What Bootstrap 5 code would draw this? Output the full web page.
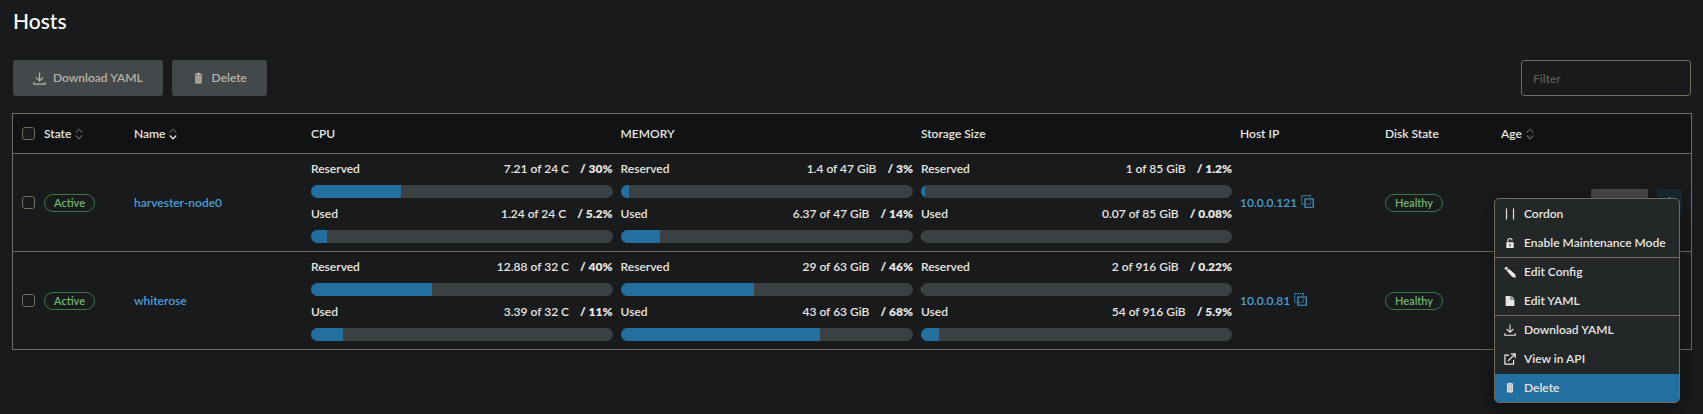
<!DOCTYPE html>
<html lang="en" data-bs-theme="dark">
<head>
<meta charset="utf-8">
<meta name="viewport" content="width=device-width, initial-scale=1">
<title>Hosts</title>
<link href="https://cdn.jsdelivr.net/npm/bootstrap@5.3.0/dist/css/bootstrap.min.css" rel="stylesheet">
<style>
  :root { --page: #181a1b; --line: #736b5e; --ink: #e8e6e3; --blue: #236f9f; --sky: #4a9fd9; }
  body { background: var(--page); color: var(--ink); font: 600 12px/20px Lato, "Open Sans", sans-serif; }
  .page { padding: 8px 11px 8px 12px; }
  h1 { font-size: 21px; line-height: 26px; font-weight: 500; padding-left: 1px; }
  .toolbar { margin: 26px 0 17px; padding: 0 1px; }
  .bulk-set { gap: 9px; }
  .bulk { --bs-btn-font-size: 12px; --bs-btn-line-height: 20px; --bs-btn-font-weight: 600; height: 36px; padding: 0 20px; border: 0; border-radius: 3px;
    display: inline-flex; align-items: center; gap: 7px; }
  .bulk:disabled { background: #43494b; color: #b8b2a9; opacity: 1; }
  .filter-box { width: 170px; height: 36px; padding: 0 11px; font-size: 12px; font-weight: 600; background: var(--page); border: 1px solid var(--line); border-radius: 3px; color: var(--ink); }
  .filter-box::placeholder { color: #605b53; opacity: 1; }

  .hosts { table-layout: fixed; border: 1px solid var(--line); border-collapse: separate; border-spacing: 0; width: 100%; }
  .hosts th, .hosts td { padding: 0 4px; vertical-align: middle; font-weight: 600; text-align: left; white-space: nowrap; }
  .hosts thead th { height: 39px; background: #101213; }
  .hosts tbody td { border-top: 1px solid var(--line); }
  .c-check { width: 27px; } .c-state { width: 90px; } .c-name { width: 177px; }
  .c-cpu { width: 18.45%; } .c-mem { width: 17.9%; }
  .c-ip { width: 145px; } .c-disk { width: 116px; } .c-age { width: 194px; }
  .hosts .pick { padding-left: 9px; }
  .hosts .form-check-input { display: block; margin: 0; width: 13px; height: 13px; border: 1px solid var(--line); border-radius: 3px; background-color: var(--page); }
  .hosts a { color: var(--sky); text-decoration: none; }
  .sorter { border: 0; padding: 0; background: none; color: inherit; font-weight: inherit; display: inline-flex; align-items: center; gap: 4px; vertical-align: middle; }
  .hosts .state-pill { display: block; width: max-content; padding: 0 9px; height: 18px; font-size: 11px; line-height: 16px; border: 1px solid #3d7740; border-radius: 9px; color: #72b574; }

  .meters { padding: 5px 0 8px; display: grid; gap: 6px; }
  .meters b { margin-left: 8px; font-weight: 800; }
  .meter { height: 13px; border-radius: 7px; background: #3b4042; }
  .meter .progress-bar { background: var(--blue); }

  .ip-cell { gap: 4px; }
  .copy-btn { border: 0; padding: 0 0 2px; background: none; color: var(--sky); }
  .row-actions { position: relative; height: 27px; gap: 9px; padding-right: 5px; }
  .act { border: 0; border-radius: 2px; height: 27px; padding: 0; }
  .act-console { width: 57px; background: #45494b; }
  .act-more { width: 25px; background: #192833; color: #3b8fc4; }
  .row-menu { position: absolute; z-index: 5; right: 7px; top: 9px; width: 186px; padding-top: 1px; background: #232728; border: 1px solid var(--line); border-radius: 5px; box-shadow: 0 5px 20px rgba(0,0,0,.4); overflow: hidden; }
  .row-menu .group { display: grid; gap: 1px; }
  .row-menu .group + .group { border-top: 1px solid var(--line); }
  .row-menu button { border: 0; background: none; color: var(--ink); font-weight: inherit; height: 28px; padding: 0 9px; display: flex; align-items: center; gap: 8px; text-align: left; }
  .row-menu button.chosen { background: var(--blue); }
  svg { display: block; flex: none; }
</style>
</head>
<body>
<svg width="0" height="0" class="position-absolute" aria-hidden="true">
  <symbol id="i-down" viewBox="0 0 12 12"><path d="M6 0.5V8M2.6 5 6 8.3 9.4 5M0.8 9.3v1.9h10.4V9.3" fill="none" stroke="currentColor" stroke-width="1.1"/></symbol>
  <symbol id="i-trash" viewBox="0 0 12 12"><path d="M2.6 1.6h2L5 .8h2l.4.8h2v1.2H2.6zM3 3.3h6V9.6q0 .9-.9.9H3.900q-.9 0-.9-.9z" fill="currentColor"/><path d="M4.800 4.500v4.800M7.200 4.500v4.800" stroke="#444" stroke-opacity=".6" stroke-width=".7"/></symbol>
  <symbol id="i-sort" viewBox="0 0 8 12"><path d="M.7 4.500 4 1.200 7.300 4.500" fill="none" stroke="#5c5a57" stroke-width="1.1"/><path d="M.7 7.500 4 10.800 7.300 7.500" fill="none" stroke="currentColor" stroke-width="1.3"/></symbol>
  <symbol id="i-copy" viewBox="0 0 12 12"><path d="M3.700 3.700h7.600v7.600H3.700z" fill="none" stroke="currentColor" stroke-width="1.1"/><path d="M8.600 5v3.600H5" fill="none" stroke="currentColor" stroke-width=".8" stroke-dasharray="1.200 .8"/><path d="M2.500 8.600H.6V.6h8v2" fill="none" stroke="currentColor" stroke-width="1" stroke-dasharray="1.200 .9"/></symbol>
  <symbol id="i-pause" viewBox="0 0 12 12"><path d="M2.500 .5v11M9.500 .5v11" stroke="currentColor" stroke-width="1.2"/></symbol>
  <symbol id="i-lock" viewBox="0 0 12 12"><path d="M3.900 5.500V3.600a2.100 2.100 0 0 1 4.200 0" fill="none" stroke="currentColor" stroke-width="1.100"/><path fill-rule="evenodd" d="M2.300 5.200h7.400v5.900H2.300zM5.500 7v2.400h1V7z" fill="currentColor"/></symbol>
  <symbol id="i-pencil" viewBox="0 0 12 12"><path d="M.2 2.400 2.200 .400 4.200 2.200 2.100 4.300zM2.600 4.800 4.800 2.700 11.200 8.200 11.900 11.800 8.300 11.100z" fill="currentColor"/></symbol>
  <symbol id="i-file" viewBox="0 0 12 12"><path d="M1.600 .900h4.900v3.600h3.900v6.600H1.600z M7.300 .900 10.400 3.800H7.300z" fill="currentColor"/></symbol>
  <symbol id="i-open" viewBox="0 0 12 12"><path d="M5 2.200H.9v8.900h8.700V7M6.800.8h4.400v4.400M11 1 4 8" fill="none" stroke="currentColor" stroke-width="1.200"/></symbol>
</svg>

<main class="page min-vh-100">
  <h1 class="m-0">Hosts</h1>

  <div class="toolbar d-flex align-items-center justify-content-between">
    <div class="d-flex bulk-set">
      <button type="button" class="btn bulk" disabled><svg width="13" height="13"><use href="#i-down"/></svg>Download YAML</button>
      <button type="button" class="btn bulk" disabled><svg width="13" height="13"><use href="#i-trash"/></svg>Delete</button>
    </div>
    <input type="search" class="form-control filter-box" placeholder="Filter" aria-label="Filter">
  </div>

  <table class="hosts">
    <colgroup><col class="c-check"><col class="c-state"><col class="c-name"><col class="c-cpu"><col class="c-mem"><col><col class="c-ip"><col class="c-disk"><col class="c-age"></colgroup>
    <thead>
      <tr>
        <th class="pick"><input class="form-check-input" type="checkbox" aria-label="Select all hosts"></th>
        <th><button type="button" class="sorter">State<svg width="8" height="12" color="#5c5a57"><use href="#i-sort"/></svg></button></th>
        <th><button type="button" class="sorter">Name<svg width="8" height="12"><use href="#i-sort"/></svg></button></th>
        <th>CPU</th>
        <th>MEMORY</th>
        <th>Storage Size</th>
        <th>Host IP</th>
        <th>Disk State</th>
        <th><button type="button" class="sorter">Age<svg width="8" height="12" color="#5c5a57"><use href="#i-sort"/></svg></button></th>
      </tr>
    </thead>
    <tbody>
      <tr>
        <td class="pick"><input class="form-check-input" type="checkbox" aria-label="Select harvester-node0"></td>
        <td><span class="state-pill">Active</span></td>
        <td><a href="#harvester-node0">harvester-node0</a></td>
        <td><div class="meters">
          <div class="d-flex justify-content-between"><span>Reserved</span><span>7.21 of 24 C <b>/ 30%</b></span></div>
          <div class="progress meter"><div class="progress-bar" style="width:30%"></div></div>
          <div class="d-flex justify-content-between"><span>Used</span><span>1.24 of 24 C <b>/ 5.2%</b></span></div>
          <div class="progress meter"><div class="progress-bar" style="width:5.2%"></div></div>
        </div></td>
        <td><div class="meters">
          <div class="d-flex justify-content-between"><span>Reserved</span><span>1.4 of 47 GiB <b>/ 3%</b></span></div>
          <div class="progress meter"><div class="progress-bar" style="width:3%"></div></div>
          <div class="d-flex justify-content-between"><span>Used</span><span>6.37 of 47 GiB <b>/ 14%</b></span></div>
          <div class="progress meter"><div class="progress-bar" style="width:13.5%"></div></div>
        </div></td>
        <td><div class="meters">
          <div class="d-flex justify-content-between"><span>Reserved</span><span>1 of 85 GiB <b>/ 1.2%</b></span></div>
          <div class="progress meter"><div class="progress-bar" style="width:1.2%"></div></div>
          <div class="d-flex justify-content-between"><span>Used</span><span>0.07 of 85 GiB <b>/ 0.08%</b></span></div>
          <div class="progress meter"><div class="progress-bar" style="width:0.3%"></div></div>
        </div></td>
        <td><div class="d-flex align-items-center ip-cell"><a href="#ip-121">10.0.0.121</a><button type="button" class="copy-btn" aria-label="Copy 10.0.0.121"><svg width="13" height="13"><use href="#i-copy"/></svg></button></div></td>
        <td><span class="state-pill">Healthy</span></td>
        <td>
          <div class="row-actions d-flex justify-content-end">
            <button type="button" class="act act-console" aria-label="Console"></button>
            <button type="button" class="act act-more" aria-label="More actions" aria-expanded="true"><svg class="mx-auto" width="3" height="13" viewBox="0 0 3 13" fill="currentColor"><circle cx="1.500" cy="1.500" r="1"/><circle cx="1.500" cy="6.500" r="1"/><circle cx="1.500" cy="11.500" r="1"/></svg></button>
            <div class="row-menu">
              <div class="group">
                <button type="button"><svg width="12" height="12"><use href="#i-pause"/></svg>Cordon</button>
                <button type="button"><svg width="12" height="12"><use href="#i-lock"/></svg>Enable Maintenance Mode</button>
              </div>
              <div class="group">
                <button type="button"><svg width="12" height="12"><use href="#i-pencil"/></svg>Edit Config</button>
                <button type="button"><svg width="12" height="12"><use href="#i-file"/></svg>Edit YAML</button>
              </div>
              <div class="group">
                <button type="button"><svg width="12" height="12"><use href="#i-down"/></svg>Download YAML</button>
                <button type="button"><svg width="12" height="12"><use href="#i-open"/></svg>View in API</button>
                <button type="button" class="chosen"><svg width="12" height="12"><use href="#i-trash"/></svg>Delete</button>
              </div>
            </div>
          </div>
        </td>
      </tr>
      <tr>
        <td class="pick"><input class="form-check-input" type="checkbox" aria-label="Select whiterose"></td>
        <td><span class="state-pill">Active</span></td>
        <td><a href="#whiterose">whiterose</a></td>
        <td><div class="meters">
          <div class="d-flex justify-content-between"><span>Reserved</span><span>12.88 of 32 C <b>/ 40%</b></span></div>
          <div class="progress meter"><div class="progress-bar" style="width:40.25%"></div></div>
          <div class="d-flex justify-content-between"><span>Used</span><span>3.39 of 32 C <b>/ 11%</b></span></div>
          <div class="progress meter"><div class="progress-bar" style="width:10.6%"></div></div>
        </div></td>
        <td><div class="meters">
          <div class="d-flex justify-content-between"><span>Reserved</span><span>29 of 63 GiB <b>/ 46%</b></span></div>
          <div class="progress meter"><div class="progress-bar" style="width:45.6%"></div></div>
          <div class="d-flex justify-content-between"><span>Used</span><span>43 of 63 GiB <b>/ 68%</b></span></div>
          <div class="progress meter"><div class="progress-bar" style="width:68.1%"></div></div>
        </div></td>
        <td><div class="meters">
          <div class="d-flex justify-content-between"><span>Reserved</span><span>2 of 916 GiB <b>/ 0.22%</b></span></div>
          <div class="progress meter"><div class="progress-bar" style="width:0.3%"></div></div>
          <div class="d-flex justify-content-between"><span>Used</span><span>54 of 916 GiB <b>/ 5.9%</b></span></div>
          <div class="progress meter"><div class="progress-bar" style="width:5.9%"></div></div>
        </div></td>
        <td><div class="d-flex align-items-center ip-cell"><a href="#ip-81">10.0.0.81</a><button type="button" class="copy-btn" aria-label="Copy 10.0.0.81"><svg width="13" height="13"><use href="#i-copy"/></svg></button></div></td>
        <td><span class="state-pill">Healthy</span></td>
        <td></td>
      </tr>
    </tbody>
  </table>
</main>
<script src="https://cdn.jsdelivr.net/npm/bootstrap@5.3.0/dist/js/bootstrap.bundle.min.js"></script>
</body>
</html>
